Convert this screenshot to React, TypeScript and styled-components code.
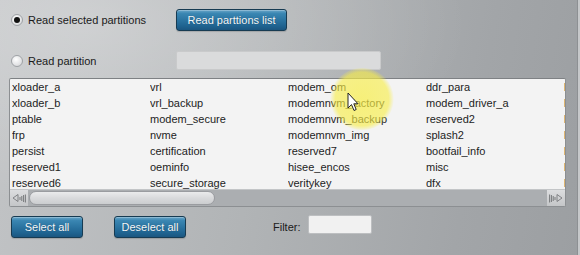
import React from 'react'
import styled, { createGlobalStyle } from 'styled-components'

const GlobalStyle = createGlobalStyle`
  html, body {
    margin: 0;
    padding: 0;
  }
  body {
    font-family: "Liberation Sans", Arial, sans-serif;
    font-size: 11px;
    color: #1b1b1b;
  }
`

// 5列目は右端で切れて 1px しか見えない
const columns = [
  ['xloader_a', 'xloader_b', 'ptable', 'frp', 'persist', 'reserved1', 'reserved6'],
  ['vrl', 'vrl_backup', 'modem_secure', 'nvme', 'certification', 'oeminfo', 'secure_storage'],
  ['modem_om', 'modemnvm_factory', 'modemnvm_backup', 'modemnvm_img', 'reserved7', 'hisee_encos', 'veritykey'],
  ['ddr_para', 'modem_driver_a', 'reserved2', 'splash2', 'bootfail_info', 'misc', 'dfx'],
  ['l', 'l', 'l', 'l', 'l', 'l', 'l'],
]

export default function App() {
  return (
    <>
      <GlobalStyle />
      <Page>
        <OptionRow>
          <OptionLabel>
            <Radio checked />
            <span>Read selected partitions</span>
          </OptionLabel>
          <BlueButton $width={111}>Read parttions list</BlueButton>
        </OptionRow>

        <OptionRow $top={20}>
          <OptionLabel>
            <Radio />
            <span>Read partition</span>
          </OptionLabel>
          <DisabledInput />
        </OptionRow>

        <ListBox>
          <ListColumns>
            {columns.map((col, i) => (
              <Column key={i}>
                {col.map((name, j) => (
                  <Item key={j}>{name}</Item>
                ))}
              </Column>
            ))}
          </ListColumns>
          <ScrollBar>
            <ScrollArrow>
              <ArrowGlyph dir="left" />
            </ScrollArrow>
            <ScrollTrack>
              <ScrollThumb />
            </ScrollTrack>
            <ScrollArrow>
              <ArrowGlyph dir="right" />
            </ScrollArrow>
          </ScrollBar>
        </ListBox>

        <BottomRow>
          <BlueButton $width={72}>Select all</BlueButton>
          <BlueButton $width={72}>Deselect all</BlueButton>
          <FilterLabel>Filter:</FilterLabel>
          <FilterInput />
        </BottomRow>

        <Highlight />
        <Cursor viewBox="0 0 12 20">
          <path
            d="M1 1 L1 16 L4.5 12.6 L7 18.5 L9.2 17.5 L6.8 11.8 L11 11.8 Z"
            fill="#fff"
            stroke="#222"
            strokeWidth="1"
            strokeLinejoin="round"
          />
        </Cursor>
      </Page>
    </>
  )
}

const ArrowGlyph = ({ dir }: { dir: 'left' | 'right' }) => (
  <svg width="14" height="10" viewBox="0 0 14 10">
    <g transform={dir === 'right' ? 'translate(14 0) scale(-1 1)' : undefined} stroke="#6d6f72" fill="none">
      <path d="M1 5 L6 1.5 L6 8.5 Z" strokeWidth="0.8" />
      <path d="M8 4 V7 M9.8 3 V8 M11.6 2 V9 M13.4 1.5 V9.5" strokeWidth="0.9" />
    </g>
  </svg>
)

const Page = styled.div`
  position: relative;
  box-sizing: border-box;
  width: 580px;
  height: 255px;
  overflow: hidden;
  padding: 9px 14px 0 9px;
  background:
    radial-gradient(ellipse at 15% 10%, rgba(255, 255, 255, 0.28), transparent 55%),
    linear-gradient(100deg, #c2c4c6 0%, #b1b4b6 45%, #a2a5a8 80%, #9c9fa2 100%);
  border-right: 2px solid #c6c8ca;
  box-shadow: inset -1px 0 0 #8d9093;
`

const OptionRow = styled.div<{ $top?: number }>`
  display: flex;
  align-items: center;
  margin-top: ${({ $top = 0 }) => $top}px;
`

const OptionLabel = styled.label`
  display: flex;
  align-items: center;
  gap: 5px;
  width: 167px;
  padding-left: 2px;
  box-sizing: border-box;
  font-size: 11px;
  color: #1a1a1a;
`

const Radio = styled.span<{ checked?: boolean }>`
  position: relative;
  width: 12px;
  height: 12px;
  border-radius: 50%;
  box-sizing: border-box;
  border: 1px solid #9fa2a6;
  background: radial-gradient(circle at 40% 35%, #ffffff, #d9dadc 80%);
  flex: none;

  &::after {
    content: '';
    display: ${({ checked }) => (checked ? 'block' : 'none')};
    position: absolute;
    left: 2px;
    top: 2px;
    width: 6px;
    height: 6px;
    border-radius: 50%;
    background: #111;
  }
`

const BlueButton = styled.button<{ $width: number }>`
  width: ${({ $width }) => $width}px;
  height: 22px;
  padding: 0;
  border: 1px solid #173b52;
  border-radius: 3px;
  background: linear-gradient(
    180deg,
    #6aa6c8 0%,
    #3a86b2 18%,
    #2b74a1 50%,
    #1f6390 80%,
    #1b5680 100%
  );
  box-shadow: inset 0 1px 0 rgba(255, 255, 255, 0.25), 0 1px 1px rgba(0, 0, 0, 0.15);
  color: #f4f8fb;
  font-family: "Liberation Sans", Arial, sans-serif;
  font-size: 11px;
  text-shadow: 0 0 1px rgba(0, 0, 0, 0.35);
  flex: none;
`

const DisabledInput = styled.div`
  width: 205px;
  height: 19px;
  box-sizing: border-box;
  background: #dadbdc;
  border: 1px solid #c9cacb;
  border-radius: 2px;
`

const ListBox = styled.div`
  margin-top: 8px;
  width: 557px;
  height: 129px;
  box-sizing: border-box;
  border: 1px solid #8c8f92;
  border-top-color: #7e8184;
  border-radius: 2px;
  background: #f3f3f3;
  display: flex;
  flex-direction: column;
  overflow: hidden;
`

const ListColumns = styled.div`
  display: grid;
  grid-template-columns: repeat(4, 138px) 1fr;
  height: 111px;
  padding-left: 2px;
  overflow: hidden;
`

const Column = styled.div`
  display: flex;
  flex-direction: column;
  min-width: 0;
  overflow: hidden;
`

const Item = styled.div`
  height: 16px;
  line-height: 16px;
  white-space: nowrap;
  font-size: 11px;
  color: #1d1d1d;
`

const ScrollBar = styled.div`
  display: flex;
  align-items: center;
  height: 16px;
  background: #abaeb1;
  border-top: 1px solid #c3c5c7;
`

const ScrollArrow = styled.div`
  width: 18px;
  height: 16px;
  display: flex;
  align-items: center;
  justify-content: center;
  background: linear-gradient(180deg, #dcdddf, #c4c6c8);
  flex: none;
`

const ScrollTrack = styled.div`
  flex: 1;
  height: 16px;
  display: flex;
  align-items: center;
  padding-left: 1px;
`

const ScrollThumb = styled.div`
  width: 186px;
  height: 14px;
  box-sizing: border-box;
  border: 1px solid #9a9ca0;
  border-radius: 7px;
  background: linear-gradient(180deg, #eaebec 0%, #d9dadc 50%, #cbcdcf 100%);
`

const BottomRow = styled.div`
  display: flex;
  align-items: center;
  gap: 31px;
  margin-top: 8px;
  padding-left: 2px;
  height: 23px;
`

const FilterLabel = styled.span`
  margin-left: 56px;
  margin-right: -24px;
  font-size: 11px;
  color: #1a1a1a;
`

const FilterInput = styled.div`
  width: 64px;
  height: 19px;
  box-sizing: border-box;
  background: #f1f1f1;
  border: 1px solid #bdbfc1;
  border-radius: 2px;
  margin-top: -4px;
`

const Highlight = styled.div`
  position: absolute;
  left: 330px;
  top: 68px;
  width: 64px;
  height: 62px;
  border-radius: 50%;
  background: radial-gradient(
    circle,
    rgba(248, 238, 70, 0.7) 0%,
    rgba(248, 238, 70, 0.62) 60%,
    rgba(248, 238, 70, 0) 72%
  );
  pointer-events: none;
`

const Cursor = styled.svg`
  position: absolute;
  left: 347px;
  top: 92px;
  width: 12px;
  height: 20px;
`
